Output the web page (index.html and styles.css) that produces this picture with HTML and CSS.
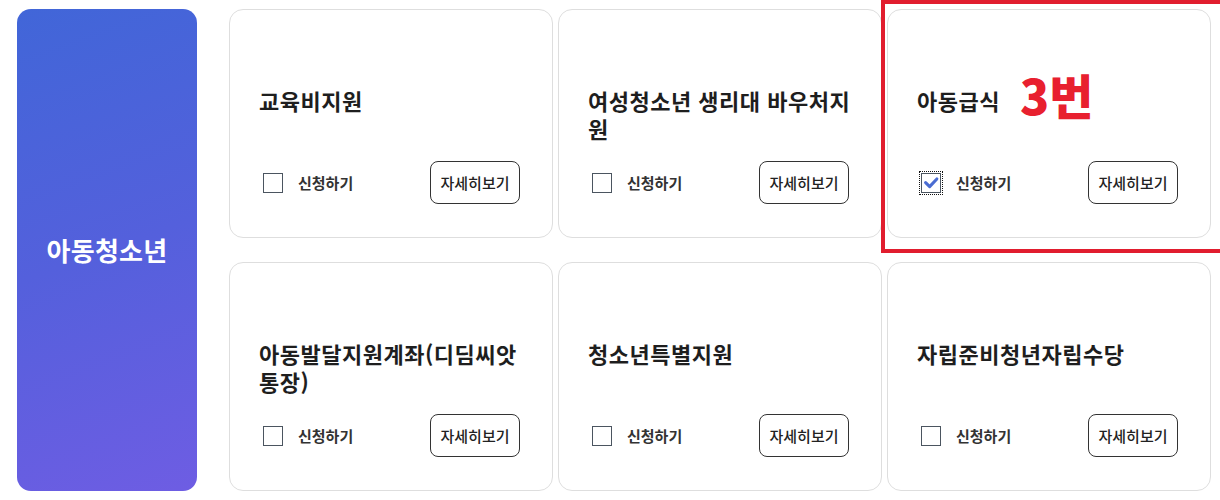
FILE: index.html
```html
<!DOCTYPE html>
<html lang="ko">
<head>
<meta charset="utf-8">
<link rel="stylesheet" href="styles.css">
</head>
<body>
<div class="wrap">
  <div class="side"><span>아동청소년</span></div>
  <div class="grid">
    <div class="card">
      <div class="title">교육비지원</div>
      <div class="ctrl">
        <label class="chk"><span class="box"></span><span class="lbl">신청하기</span></label>
        <button class="more">자세히보기</button>
      </div>
    </div>
    <div class="card">
      <div class="title">여성청소년 생리대 바우처지원</div>
      <div class="ctrl">
        <label class="chk"><span class="box"></span><span class="lbl">신청하기</span></label>
        <button class="more">자세히보기</button>
      </div>
    </div>
    <div class="card hl">
      <div class="title">아동급식</div>
      <div class="ctrl">
        <label class="chk"><span class="box checked"><svg viewBox="0 0 20 20" width="18" height="18"><path d="M4 9.5 L8.5 14 L16.5 5.5" fill="none" stroke="#4a6cd2" stroke-width="3.4" stroke-linecap="round" stroke-linejoin="round"/></svg></span><span class="lbl">신청하기</span></label>
        <button class="more">자세히보기</button>
      </div>
      <div class="mark"></div>
      <div class="num">3번</div>
    </div>
    <div class="card">
      <div class="title">아동발달지원계좌(디딤씨앗 통장)</div>
      <div class="ctrl">
        <label class="chk"><span class="box"></span><span class="lbl">신청하기</span></label>
        <button class="more">자세히보기</button>
      </div>
    </div>
    <div class="card">
      <div class="title">청소년특별지원</div>
      <div class="ctrl">
        <label class="chk"><span class="box"></span><span class="lbl">신청하기</span></label>
        <button class="more">자세히보기</button>
      </div>
    </div>
    <div class="card">
      <div class="title">자립준비청년자립수당</div>
      <div class="ctrl">
        <label class="chk"><span class="box"></span><span class="lbl">신청하기</span></label>
        <button class="more">자세히보기</button>
      </div>
    </div>
  </div>
</div>
</body>
</html>
```

FILE: styles.css
```css
* { box-sizing: border-box; }
html, body { margin: 0; background: #fff; }
body {
  font-family: "Noto Sans CJK KR", "Noto Sans", sans-serif;
  color: #222;
  overflow: hidden;
}
.wrap {
  display: flex;
  gap: 32px;
  padding: 9px 0 0 17px;
}
.side {
  width: 180px;
  height: 482px;
  border-radius: 14px;
  background: linear-gradient(160deg, #4166d8 0%, #5460dc 50%, #6e5de3 100%);
  display: flex;
  align-items: center;
  justify-content: center;
  color: #fff;
  font-size: 26px;
  font-weight: 700;
  letter-spacing: 0.3px;
  padding-bottom: 2px;
}
.grid {
  display: grid;
  grid-template-columns: repeat(3, 324px);
  grid-template-rows: 229px 229px;
  column-gap: 5px;
  row-gap: 24px;
}
.card {
  position: relative;
  border: 1px solid #dedede;
  border-radius: 14px;
  background: #fff;
  display: flex;
  flex-direction: column;
  padding: 76px 32px 33px 29px;
}
.title {
  font-size: 22px;
  font-weight: 700;
  line-height: 28px;
  letter-spacing: 0.5px;
  color: #1e1e1e;
  margin-right: -5px;
}
.ctrl {
  margin-top: auto;
  display: flex;
  align-items: center;
  justify-content: space-between;
}
.chk {
  display: flex;
  align-items: center;
  gap: 15px;
  padding-left: 4px;
}
.box {
  width: 20px;
  height: 20px;
  border: 1px solid #4b5560;
  background: #fff;
  display: flex;
  align-items: center;
  justify-content: center;
}
.box.checked {
  outline: 1px dotted #111;
  outline-offset: 1px;
}
.lbl {
  font-size: 15px;
  font-weight: 700;
  color: #333;
  letter-spacing: 0;
}
.more {
  width: 90px;
  height: 43px;
  border: 1px solid #333;
  border-radius: 8px;
  background: #fff;
  font-family: inherit;
  font-size: 15px;
  font-weight: 500;
  color: #222;
  letter-spacing: 0;
  padding: 0;
}
.mark {
  position: absolute;
  left: -7px;
  top: -10px;
  width: 400px;
  height: 253px;
  border: 4px solid #e11d2e;
  pointer-events: none;
}
.num {
  position: absolute;
  left: 132px;
  top: 52px;
  font-size: 48px;
  font-weight: 900;
  color: #e8202f;
  letter-spacing: 0;
  line-height: 64px;
}
```
